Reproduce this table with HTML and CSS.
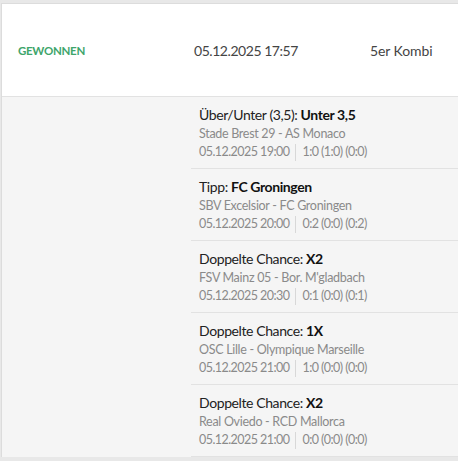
FILE: index.html
```html
<!DOCTYPE html>
<html lang="de">
<head>
<meta charset="utf-8">
<link rel="stylesheet" href="styles.css">
</head>
<body>
<div class="card">
  <div class="head">
    <div class="status">GEWONNEN</div>
    <div class="when">05.12.2025 17:57</div>
    <div class="type">5er Kombi</div>
  </div>
  <div class="body">
    <div class="side"></div>
    <div class="list">
      <div class="item">
        <div class="tip">Über/Unter (3,5): <b>Unter 3,5</b></div>
        <div class="match">Stade Brest 29 - AS Monaco</div>
        <div class="meta"><span>05.12.2025 19:00</span><span class="sep"></span><span>1:0 (1:0) (0:0)</span></div>
      </div>
      <div class="item">
        <div class="tip">Tipp: <b>FC Groningen</b></div>
        <div class="match">SBV Excelsior - FC Groningen</div>
        <div class="meta"><span>05.12.2025 20:00</span><span class="sep"></span><span>0:2 (0:0) (0:2)</span></div>
      </div>
      <div class="item">
        <div class="tip">Doppelte Chance: <b>X2</b></div>
        <div class="match">FSV Mainz 05 - Bor. M'gladbach</div>
        <div class="meta"><span>05.12.2025 20:30</span><span class="sep"></span><span>0:1 (0:0) (0:1)</span></div>
      </div>
      <div class="item">
        <div class="tip">Doppelte Chance: <b>1X</b></div>
        <div class="match">OSC Lille - Olympique Marseille</div>
        <div class="meta"><span>05.12.2025 21:00</span><span class="sep"></span><span>1:0 (0:0) (0:0)</span></div>
      </div>
      <div class="item">
        <div class="tip">Doppelte Chance: <b>X2</b></div>
        <div class="match">Real Oviedo - RCD Mallorca</div>
        <div class="meta"><span>05.12.2025 21:00</span><span class="sep"></span><span>0:0 (0:0) (0:0)</span></div>
      </div>
    </div>
  </div>
</div>
</body>
</html>
```
FILE: styles.css
```css
html, body {
  margin: 0;
  padding: 0;
  background: #e8e8e8;
  overflow: hidden;
}
body {
  padding: 3px 0 0 1px;
  font-family: Lato, "Open Sans", sans-serif;
  color: #333;
}
.card {
  border-top: 1px solid #dcdcdc;
  border-left: 1px solid #dcdcdc;
  background: #f5f5f5;
}
.head {
  display: flex;
  align-items: center;
  height: 92px;
  background: #fff;
  border-bottom: 1px solid #e2e2e2;
}
.status {
  width: 176px;
  padding-left: 16px;
  color: #3ea56b;
  font-weight: bold;
  font-size: 11.5px;
  letter-spacing: -0.3px;
}
.when {
  width: 176px;
  font-size: 14px;
  letter-spacing: -0.45px;
  color: #444;
}
.type {
  font-size: 14px;
  letter-spacing: -0.1px;
  color: #444;
}
.body {
  display: flex;
}
.side {
  width: 189px;
  flex: none;
}
.list {
  flex: 1;
}
.item {
  padding: 8px 8px 7px;
  border-bottom: 1px solid #e2e2e2;
}
.tip {
  font-size: 14px;
  line-height: 20px;
  letter-spacing: -0.4px;
  color: #222;
}
.tip b {
  color: #111;
}
.match, .meta {
  font-size: 12.5px;
  line-height: 18px;
  letter-spacing: -0.3px;
  color: #8a8a8a;
}
.meta {
  display: flex;
  align-items: center;
  letter-spacing: -0.55px;
}
.sep {
  width: 1px;
  height: 17px;
  background: #d8d8d8;
  margin: 0 6px;
}
```
